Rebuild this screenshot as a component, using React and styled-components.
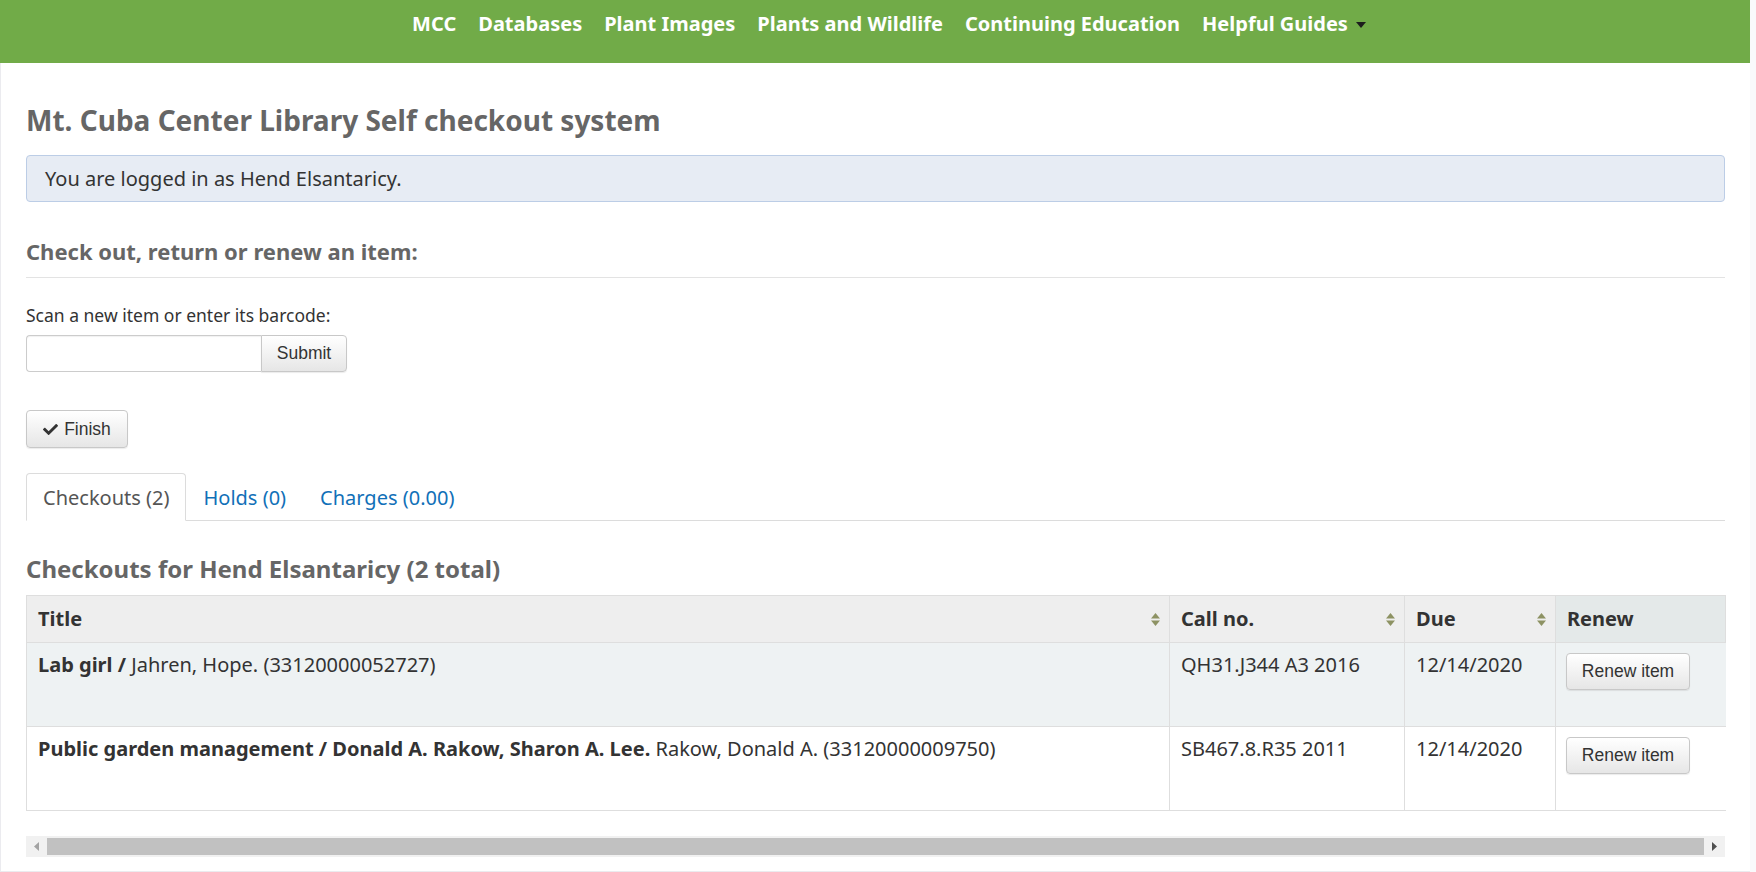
import styled, { createGlobalStyle } from "styled-components";
import { FaCheck } from "react-icons/fa";

const GlobalStyle = createGlobalStyle`
  html, body {
    margin: 0;
    padding: 0;
    background: #f9f9fb;
  }
  body {
    font-family: "Noto Sans", "Open Sans", sans-serif;
    color: #333;
  }
  * {
    box-sizing: border-box;
  }
`;

const Navbar = styled.nav`
  height: 63px;
  margin-right: 6px;
  background: #71ab48;
  display: flex;
  justify-content: center;
  align-items: flex-start;
  padding-top: 8px;
  padding-left: 28px;
`;

const NavLink = styled.a`
  display: flex;
  align-items: center;
  gap: 8px;
  padding: 0 11px;
  line-height: 31px;
  font-size: 20px;
  font-weight: 700;
  color: #fff;
  text-decoration: none;
`;

const Caret = styled.span`
  width: 0;
  height: 0;
  border-left: 5px solid transparent;
  border-right: 5px solid transparent;
  border-top: 6px solid #1d1d1d;
  margin-top: 2px;
`;

const Panel = styled.main`
  margin-right: 6px;
  background: #fff;
  border-left: 1px solid #ebebef;
  border-bottom: 1px solid #ebebef;
  padding: 41px 25px 14px 25px;
`;

const Title = styled.h1`
  margin: 0;
  font-size: 28px;
  line-height: 33px;
  font-weight: 700;
  color: #666;
`;

const Alert = styled.div`
  margin-top: 18px;
  padding: 10px 18px;
  background: #e7ecf4;
  border: 1px solid #bccde6;
  border-radius: 4px;
  font-size: 20px;
  line-height: 25px;
  color: #333;
`;

const SectionTitle = styled.h2`
  margin: ${(p) => p.$mt || "0"} 0 0;
  padding-bottom: ${(p) => (p.$ruled ? "13px" : "0")};
  border-bottom: ${(p) => (p.$ruled ? "1px solid #e3e3e3" : "none")};
  font-size: ${(p) => p.$size || "22px"};
  line-height: 1.2;
  font-weight: 700;
  color: #666;
`;

const Label = styled.label`
  display: block;
  margin-top: 24px;
  font-size: 17.5px;
  line-height: 26px;
  color: #333;
`;

const InputGroup = styled.div`
  display: flex;
  margin-top: 7px;
`;

const BarcodeInput = styled.input`
  width: 235px;
  height: 37px;
  border: 1px solid #ccc;
  border-right: none;
  border-radius: 4px 0 0 4px;
  font-size: 17.5px;
  padding: 0 10px;
  outline: none;
  box-shadow: inset 0 1px 1px rgba(0, 0, 0, 0.06);
`;

const Button = styled.button`
  display: inline-flex;
  align-items: center;
  justify-content: center;
  gap: 6px;
  height: ${(p) => p.$h || "37px"};
  width: ${(p) => p.$w || "auto"};
  padding: 0 12px;
  font-family: "Liberation Sans", Arial, sans-serif;
  font-size: 17.5px;
  color: #333;
  background: linear-gradient(to bottom, #ffffff 0%, #e6e6e6 100%);
  border: 1px solid #c8c8c8;
  border-radius: ${(p) => p.$radius || "4px"};
  box-shadow: 0 1px 1px rgba(0, 0, 0, 0.08);
  cursor: pointer;
`;

const FinishRow = styled.div`
  margin-top: 38px;
`;

const Tabs = styled.ul`
  display: flex;
  list-style: none;
  margin: 25px 0 0;
  padding: 0;
  border-bottom: 1px solid #dcdcdc;
`;

const Tab = styled.li`
  height: 48px;
  margin-bottom: -1px;
  padding: 0 16px;
  display: flex;
  align-items: center;
  font-size: 20px;
  color: ${(p) => (p.$active ? "#555" : "#1170b8")};
  background: ${(p) => (p.$active ? "#fff" : "transparent")};
  border: 1px solid ${(p) => (p.$active ? "#dcdcdc" : "transparent")};
  border-bottom-color: ${(p) => (p.$active ? "#fff" : "transparent")};
  border-radius: 4px 4px 0 0;
`;

const Table = styled.table`
  width: 100%;
  margin-top: 11px;
  border-collapse: collapse;
  table-layout: fixed;
  font-size: 20px;
  line-height: 28px;
`;

const HeadCell = styled.th`
  position: relative;
  height: 47px;
  padding: 0 11px;
  text-align: left;
  font-weight: 700;
  color: #333;
  background: ${(p) => (p.$plain ? "#e4e9e9" : "#eeeeee")};
  border: 1px solid #dedede;
`;

const SortIcon = styled.svg`
  position: absolute;
  right: 9px;
  top: 17px;
`;

const Row = styled.tr`
  background: ${(p) => (p.$odd ? "#eef2f3" : "#fff")};
`;

const Cell = styled.td`
  height: 84px;
  padding: 8px 11px;
  vertical-align: top;
  border: 1px solid #dedede;
  border-right-color: ${(p) => (p.$last ? "transparent" : "#dedede")};
  color: #333;
`;

const ButtonCell = styled(Cell)`
  padding: 10px 10px;
`;

const Scrollbar = styled.div`
  display: flex;
  align-items: center;
  height: 21px;
  margin-top: 25px;
  background: #f1f1f1;
`;

const ScrollArrow = styled.div`
  width: 21px;
  height: 21px;
  display: flex;
  align-items: center;
  justify-content: center;
`;

const Thumb = styled.div`
  flex: 1;
  height: 17px;
  background: #c1c1c1;
`;

function Sort() {
  return (
    <SortIcon width="9" height="13" viewBox="0 0 9 13" aria-hidden="true">
      <path d="M4.5 0 L9 5.5 L0 5.5 Z" fill="#8d9263" />
      <path d="M0 7.5 L9 7.5 L4.5 13 Z" fill="#8d9263" />
    </SortIcon>
  );
}

const navItems = [
  "MCC",
  "Databases",
  "Plant Images",
  "Plants and Wildlife",
  "Continuing Education",
];

const checkouts = [
  {
    title: "Lab girl /",
    rest: " Jahren, Hope. (33120000052727)",
    call: "QH31.J344 A3 2016",
    due: "12/14/2020",
  },
  {
    title: "Public garden management / Donald A. Rakow, Sharon A. Lee.",
    rest: " Rakow, Donald A. (33120000009750)",
    call: "SB467.8.R35 2011",
    due: "12/14/2020",
  },
];

export default function App() {
  return (
    <>
      <GlobalStyle />
      <Navbar>
        {navItems.map((item) => (
          <NavLink key={item} href="#">
            {item}
          </NavLink>
        ))}
        <NavLink href="#">
          Helpful Guides
          <Caret />
        </NavLink>
      </Navbar>
      <Panel>
        <Title>Mt. Cuba Center Library Self checkout system</Title>
        <Alert>You are logged in as Hend Elsantaricy.</Alert>

        <SectionTitle $mt="36px" $ruled>
          Check out, return or renew an item:
        </SectionTitle>
        <Label htmlFor="barcode">Scan a new item or enter its barcode:</Label>
        <InputGroup>
          <BarcodeInput id="barcode" type="text" />
          <Button $w="86px" $radius="0 4px 4px 0">
            Submit
          </Button>
        </InputGroup>

        <FinishRow>
          <Button $w="102px" $h="38px">
            <FaCheck size={15} />
            Finish
          </Button>
        </FinishRow>

        <Tabs>
          <Tab $active>Checkouts (2)</Tab>
          <Tab>Holds (0)</Tab>
          <Tab>Charges (0.00)</Tab>
        </Tabs>

        <SectionTitle $mt="34px" $size="24px">
          Checkouts for Hend Elsantaricy (2 total)
        </SectionTitle>

        <Table>
          <colgroup>
            <col style={{ width: "1143px" }} />
            <col style={{ width: "235px" }} />
            <col style={{ width: "151px" }} />
            <col style={{ width: "170px" }} />
          </colgroup>
          <thead>
            <tr>
              <HeadCell>
                Title
                <Sort />
              </HeadCell>
              <HeadCell>
                Call no.
                <Sort />
              </HeadCell>
              <HeadCell>
                Due
                <Sort />
              </HeadCell>
              <HeadCell $plain>Renew</HeadCell>
            </tr>
          </thead>
          <tbody>
            {checkouts.map((c, i) => (
              <Row key={c.call} $odd={i % 2 === 0}>
                <Cell>
                  <strong>{c.title}</strong>
                  {c.rest}
                </Cell>
                <Cell>{c.call}</Cell>
                <Cell>{c.due}</Cell>
                <ButtonCell $last>
                  <Button $w="124px">Renew item</Button>
                </ButtonCell>
              </Row>
            ))}
          </tbody>
        </Table>

        <Scrollbar>
          <ScrollArrow>
            <svg width="5" height="9" viewBox="0 0 5 9" aria-hidden="true">
              <path d="M5 0 L0 4.5 L5 9 Z" fill="#a3a3a3" />
            </svg>
          </ScrollArrow>
          <Thumb />
          <ScrollArrow>
            <svg width="5" height="9" viewBox="0 0 5 9" aria-hidden="true">
              <path d="M0 0 L5 4.5 L0 9 Z" fill="#505050" />
            </svg>
          </ScrollArrow>
        </Scrollbar>
      </Panel>
    </>
  );
}
